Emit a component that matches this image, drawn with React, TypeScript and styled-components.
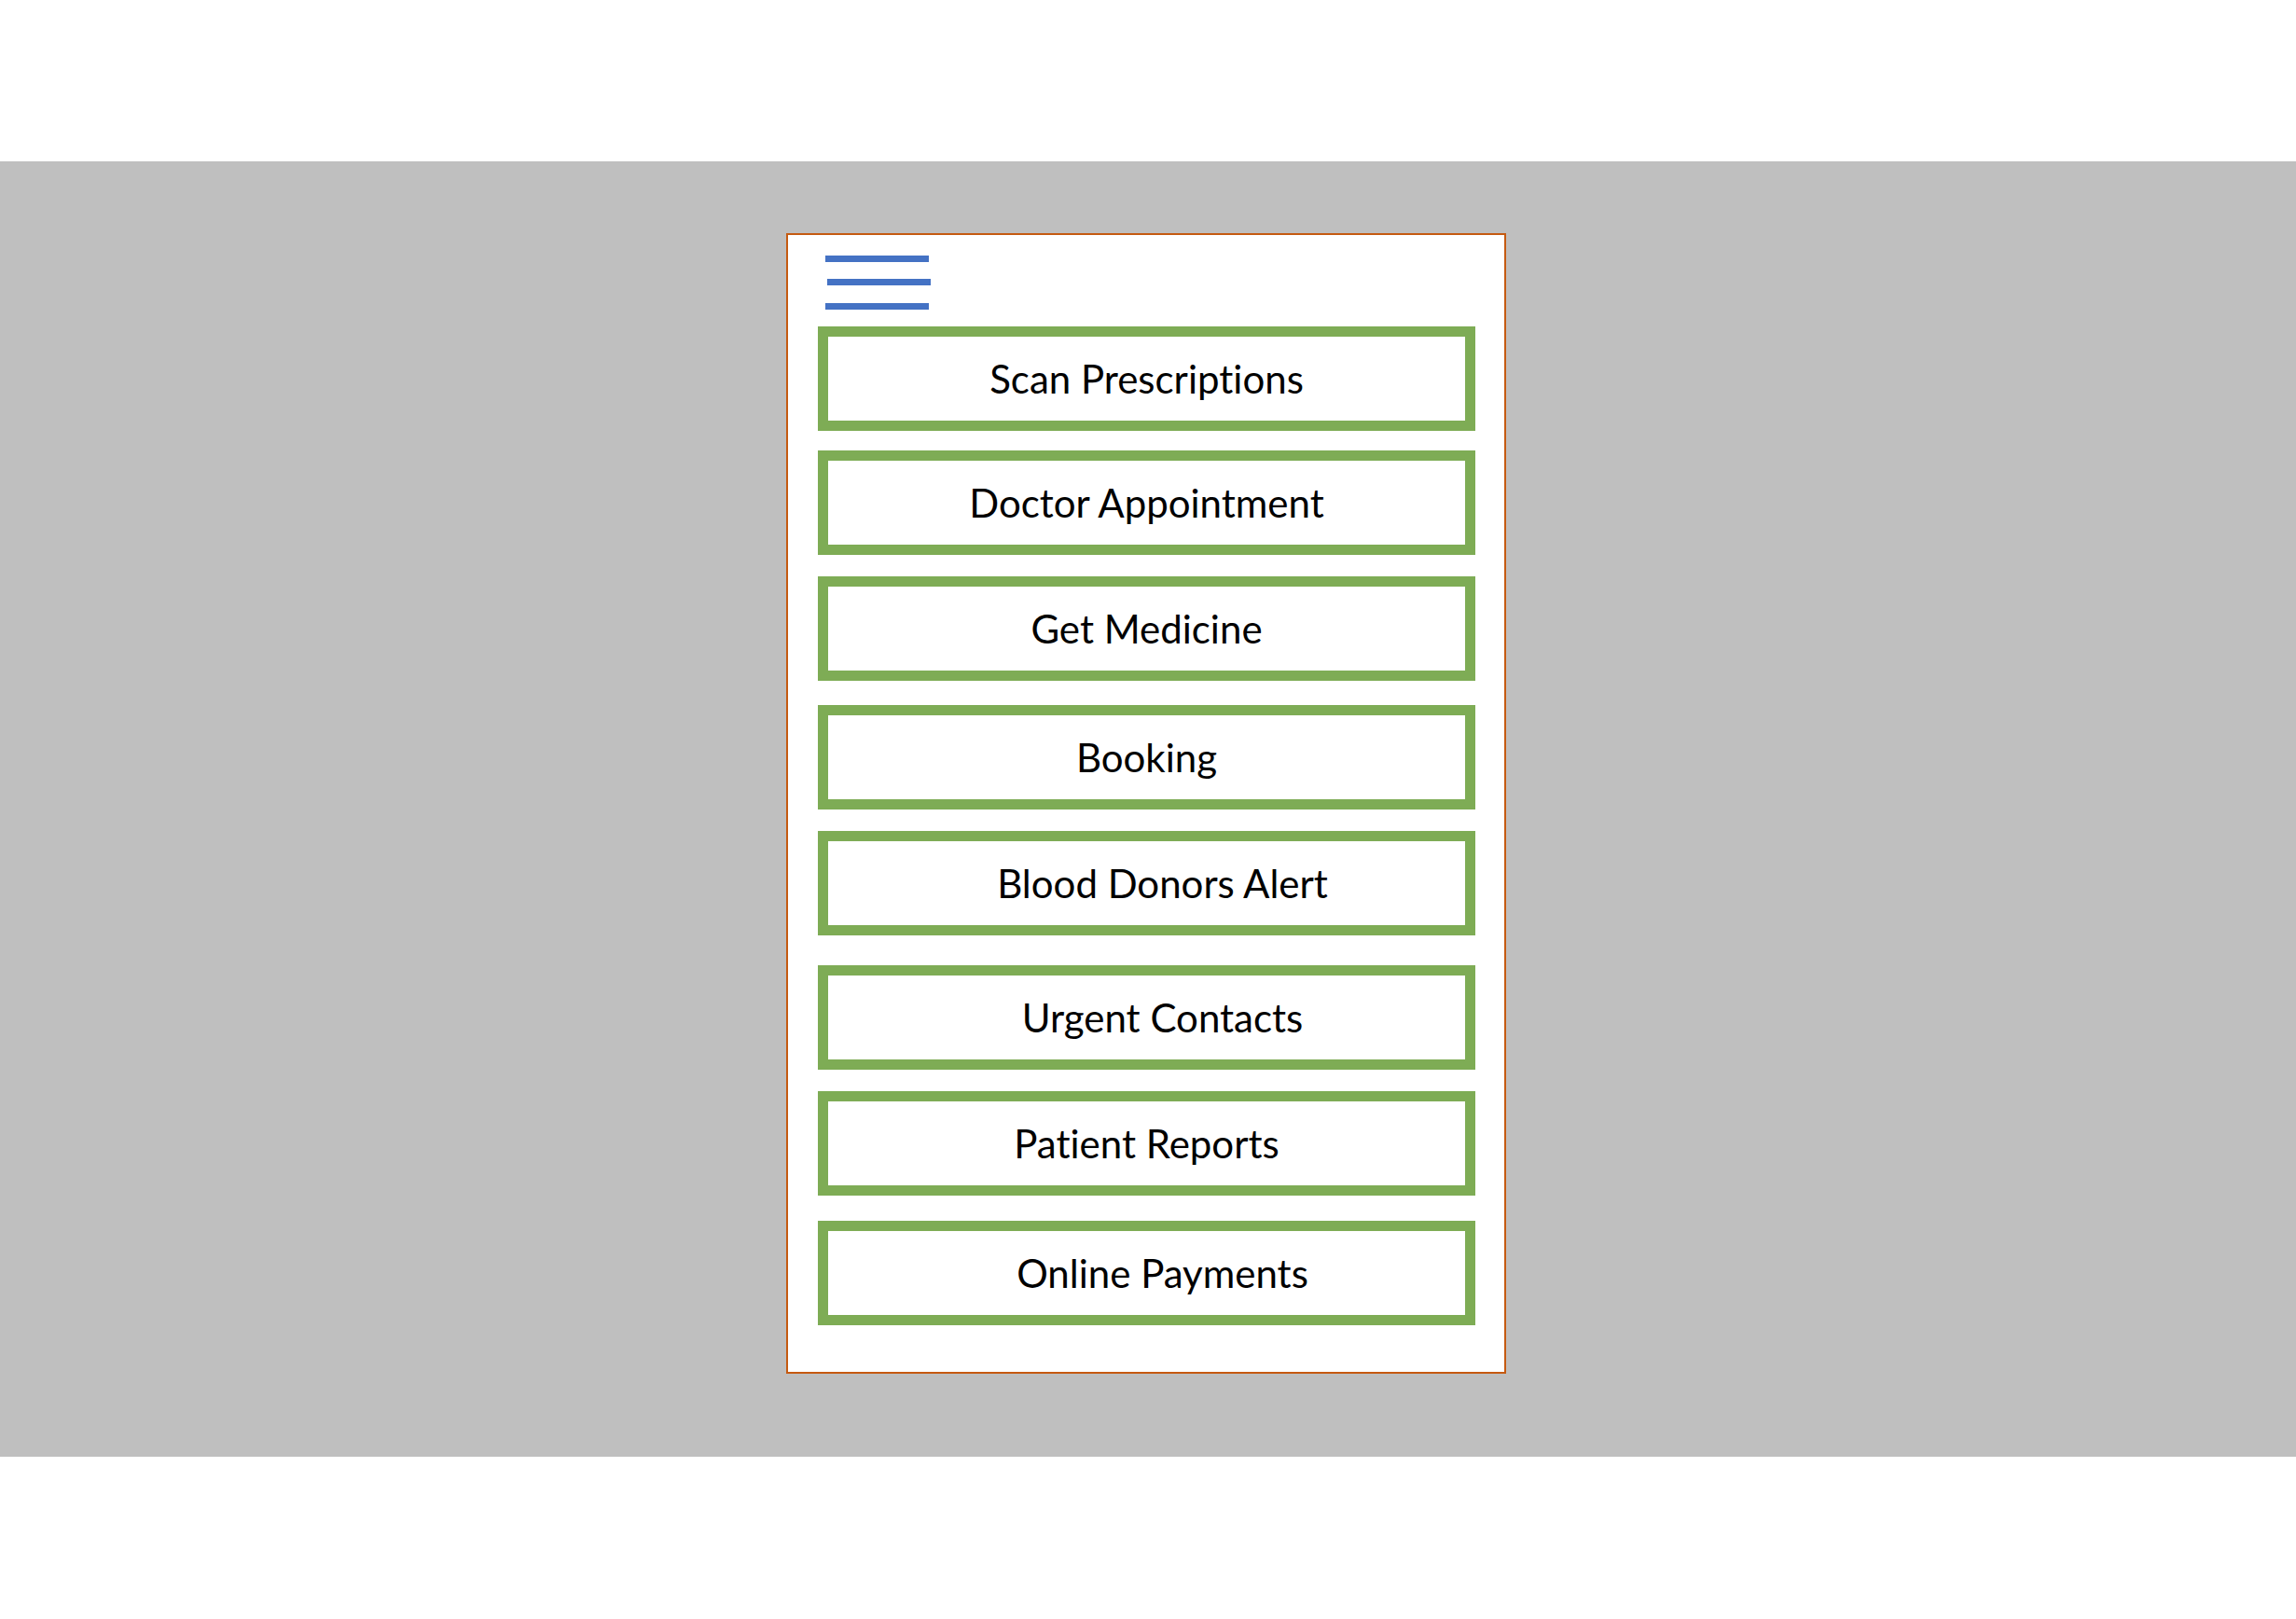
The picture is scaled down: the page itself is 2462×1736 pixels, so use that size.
import styled, { createGlobalStyle } from 'styled-components';

const GlobalStyle = createGlobalStyle`
  html, body {
    margin: 0;
    padding: 0;
    background: #ffffff;
  }
  body {
    font-family: Lato, 'Open Sans', Arial, sans-serif;
  }
`;

const Page = styled.div`
  width: 2462px;
  height: 1736px;
  padding-top: 173px;
  box-sizing: border-box;
  background: #ffffff;
`;

const Band = styled.div`
  height: 1389px;
  background-color: #bfbfbf;
  padding: 77px 0 0 843px;
  box-sizing: border-box;
`;

const Phone = styled.div`
  width: 772px;
  height: 1223px;
  box-sizing: border-box;
  border: 2px solid #c55a11;
  background: #ffffff;
  padding: 22px 0 0 32px;
  display: flex;
  flex-direction: column;
`;

const MenuButton = styled.div`
  padding-left: 8px;
  height: 76px;
  display: flex;
  align-items: flex-start;
`;

const MenuList = styled.div`
  display: flex;
  flex-direction: column;
`;

const MenuItem = styled.div<{ $gap: number; $shift: number }>`
  width: 705px;
  height: 112px;
  box-sizing: border-box;
  margin-top: ${(p) => p.$gap}px;
  border: 11px solid #7eac55;
  display: flex;
  align-items: center;
  justify-content: center;
  padding-left: ${(p) => Math.max(p.$shift, 0) * 2}px;
  font-size: 42px;
  font-variant-ligatures: none;
  color: #000000;
`;

const items = [
  { label: 'Scan Prescriptions', gap: 0, shift: 0 },
  { label: 'Doctor Appointment', gap: 21, shift: 0 },
  { label: 'Get Medicine', gap: 23, shift: 0 },
  { label: 'Booking', gap: 26, shift: 0 },
  { label: 'Blood Donors Alert', gap: 23, shift: 17 },
  { label: 'Urgent Contacts', gap: 32, shift: 17 },
  { label: 'Patient Reports', gap: 23, shift: 0 },
  { label: 'Online Payments', gap: 27, shift: 17 },
];

function Hamburger() {
  return (
    <svg width="116" height="60" viewBox="0 0 116 60">
      <rect x="0" y="0" width="111" height="7" fill="#4472c4" />
      <rect x="2" y="25" width="111" height="7" fill="#4472c4" />
      <rect x="0" y="51" width="111" height="7" fill="#4472c4" />
    </svg>
  );
}

export default function App() {
  return (
    <Page>
      <GlobalStyle />
      <Band>
        <Phone>
          <MenuButton>
            <Hamburger />
          </MenuButton>
          <MenuList>
            {items.map((it) => (
              <MenuItem key={it.label} $gap={it.gap} $shift={it.shift}>
                {it.label}
              </MenuItem>
            ))}
          </MenuList>
        </Phone>
      </Band>
    </Page>
  );
}
